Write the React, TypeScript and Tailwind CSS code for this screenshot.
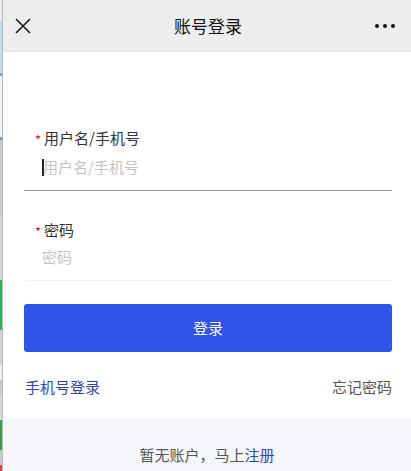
import React from "react";

const strip: [number, string][] = [
  [21, "#eeeeee"],
  [52, "#c8daf0"],
  [3, "#7fa6d0"],
  [61, "#f2f4f7"],
  [3, "#6a9bd0"],
  [75, "#c6c6c6"],
  [65, "#d6d6d6"],
  [50, "#22bb5e"],
  [35, "#d4d4d4"],
  [15, "#f0f0f0"],
  [15, "#c8c8c8"],
  [25, "#d8d8d8"],
  [30, "#2ea44f"],
  [15, "#c8c8c8"],
  [6, "#e04040"],
];

export default function App() {
  return (
    <div
      className="w-[411px] h-[471px] overflow-hidden flex bg-white"
      style={{ fontFamily: '"Noto Sans CJK SC", "Noto Sans", sans-serif' }}
    >
      <div className="w-[3px] flex shrink-0">
        <div className="w-[2px] flex flex-col">
          {strip.map(([h, c], i) => (
            <div key={i} style={{ height: h, background: c }} />
          ))}
        </div>
        <div className="w-[1px] bg-[#b8b8b8]" />
      </div>
      <div className="flex-1 flex flex-col">
        {/* header */}
        <div className="h-[52px] shrink-0 bg-[#ededed] border-b border-[#e2e2e2] flex items-center pl-[12px] pr-[16px]">
          <div className="flex-1 flex items-center">
            <svg width="16" height="16" viewBox="0 0 16 16">
              <path d="M1 1 L15 15 M15 1 L1 15" stroke="#1a1a1a" strokeWidth="1.6" fill="none" />
            </svg>
          </div>
          <div className="text-[17px] text-[#111] leading-none ml-[6px]">账号登录</div>
          <div className="flex-1 flex gap-[4px] items-center justify-end">
            <span className="w-[4px] h-[4px] rounded-full bg-[#111]" />
            <span className="w-[4px] h-[4px] rounded-full bg-[#111]" />
            <span className="w-[4px] h-[4px] rounded-full bg-[#111]" />
          </div>
        </div>

        {/* body */}
        <div className="flex-1 flex flex-col pl-[21px] pr-[19px] pt-[76px]">
          {/* username */}
          <div className="border-b border-[#8c96b4] pb-[13px]">
            <div className="flex items-center h-[20px] pl-[11px] text-[15px] text-[#333]">
              <span className="text-[#d0103a] text-[13px] mr-[3px] mt-[3px]">*</span>
              <span>用户名/手机号</span>
            </div>
            <div className="flex items-center h-[20px] mt-[9px] pl-[18px] text-[15px] text-[#c4c4c4]">
              <span className="w-[2px] h-[17px] bg-[#222]" />
              <span className="-ml-[1px]">用户名/手机号</span>
            </div>
          </div>

          {/* password */}
          <div className="border-b border-[#efefef] pb-[13px] mt-[29px] ml-[2px]">
            <div className="flex items-center h-[20px] pl-[9px] text-[15px] text-[#333]">
              <span className="text-[#d0103a] text-[13px] mr-[3px] mt-[3px]">*</span>
              <span>密码</span>
            </div>
            <div className="flex items-center h-[20px] mt-[7px] pl-[16px] text-[15px] text-[#c4c4c4]">
              <span>密码</span>
            </div>
          </div>

          <button className="mt-[23px] h-[48px] w-full rounded-[3px] bg-[#3052e6] text-white text-[15px] flex items-center justify-center">
            登录
          </button>

          <div className="flex justify-between items-center mt-[25px] h-[20px] text-[15px]">
            <span className="text-[#3346a8] ml-[1px]">手机号登录</span>
            <span className="text-[#555]">忘记密码</span>
          </div>
        </div>

        {/* footer */}
        <div className="h-[53px] shrink-0 bg-[#f5f6f9] flex justify-center pt-[27px] text-[15px] text-[#555] leading-[20px]">
          <span>
            暂无账户，马上<span className="text-[#3346a8]">注册</span>
          </span>
        </div>
      </div>
    </div>
  );
}
